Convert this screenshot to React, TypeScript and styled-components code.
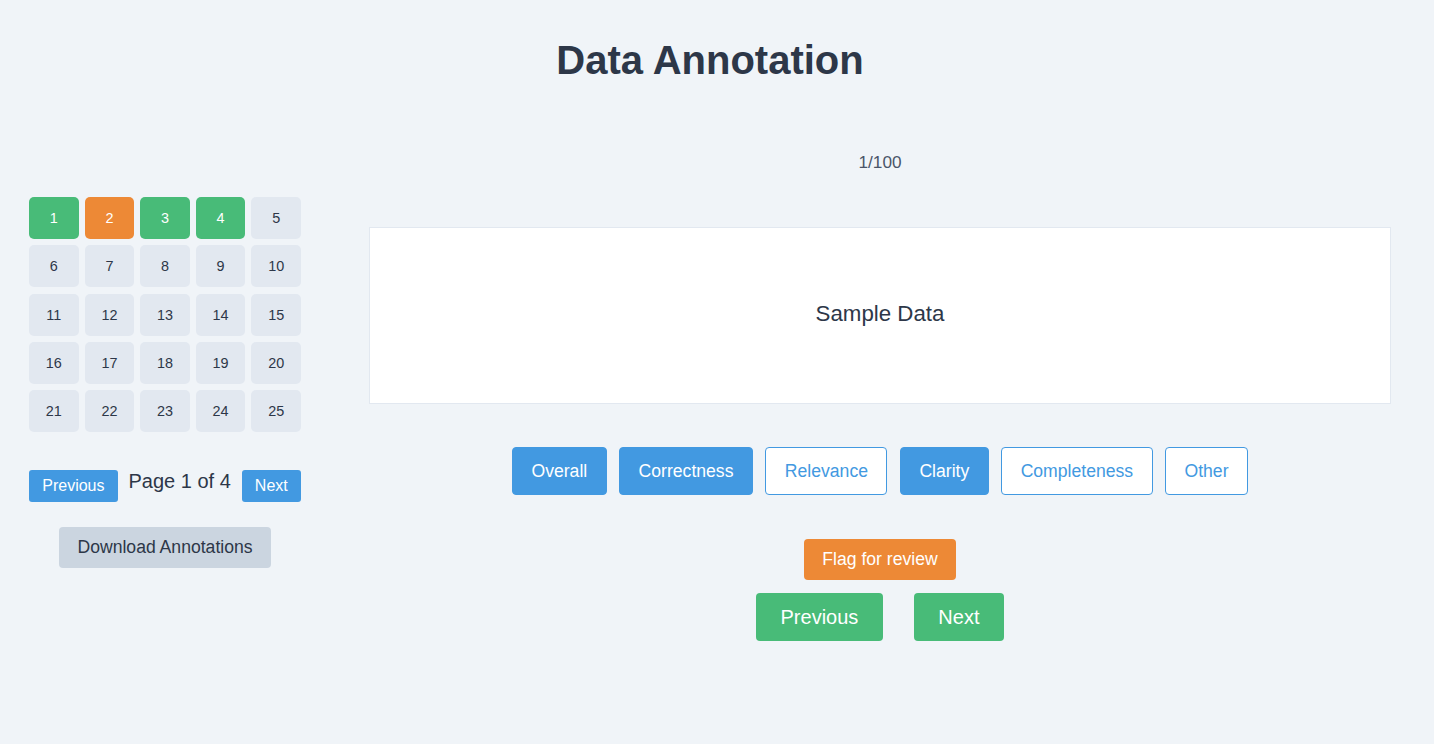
import React, { useState } from "react";
import styled, { createGlobalStyle, css } from "styled-components";

const GlobalStyle = createGlobalStyle`
  html, body {
    margin: 0;
    padding: 0;
    background: #f0f4f8;
    font-family: "Liberation Sans", Arial, sans-serif;
    color: #2d3748;
  }
  * { box-sizing: border-box; }
`;

const Page = styled.div`
  min-height: 744px;
  padding: 0 43px 0 29px;
`;

const Title = styled.h1`
  margin: 37px 0 0;
  font-size: 40px;
  line-height: 46px;
  font-weight: 700;
  text-align: center;
  color: #2d3748;
`;

const Layout = styled.div`
  display: flex;
  align-items: flex-start;
  gap: 68px;
`;

const Sidebar = styled.aside`
  width: 272px;
  flex-shrink: 0;
  margin-top: 114px;
  display: flex;
  flex-direction: column;
  align-items: center;
`;

const Grid = styled.div`
  width: 100%;
  display: grid;
  grid-template-columns: repeat(5, 1fr);
  grid-auto-rows: 42px;
  column-gap: 6px;
  row-gap: 6.25px;
`;

type CellState = "done" | "flagged" | "idle";

const Cell = styled.button<{ $state: CellState }>`
  border: none;
  border-radius: 5px;
  font-family: inherit;
  font-size: 14.4px;
  cursor: pointer;
  padding: 0;
  ${({ $state }) =>
    $state === "done"
      ? css`background: #48bb78; color: #fff;`
      : $state === "flagged"
      ? css`background: #ed8936; color: #fff;`
      : css`background: #e2e8f0; color: #2d3748;`}
`;

const Pager = styled.div`
  margin-top: 38px;
  display: flex;
  align-items: flex-start;
  justify-content: center;
  gap: 11px;
  width: 100%;
`;

const SmallButton = styled.button`
  height: 32px;
  padding: 0 13px;
  border: none;
  border-radius: 3px;
  background: #4299e1;
  color: #fff;
  font-family: inherit;
  font-size: 16px;
  cursor: pointer;
`;

const PageLabel = styled.span`
  font-size: 20px;
  line-height: 23px;
  color: #2d3748;
  white-space: nowrap;
`;

const DownloadButton = styled.button`
  margin-top: 25px;
  height: 41px;
  padding: 0 18px;
  border: none;
  border-radius: 4px;
  background: #cbd5e0;
  color: #2d3748;
  font-family: inherit;
  font-size: 17.6px;
  cursor: pointer;
`;

const Main = styled.main`
  flex: 1;
  display: flex;
  flex-direction: column;
  align-items: center;
  padding-top: 69px;
`;

const Counter = styled.div`
  font-size: 17.2px;
  line-height: 20px;
  color: #4a5568;
`;

const DataCard = styled.div`
  margin-top: 55px;
  width: 100%;
  height: 177px;
  padding-bottom: 4px;
  background: #fff;
  border: 1px solid #e2e8f0;
  display: flex;
  align-items: center;
  justify-content: center;
  font-size: 22.3px;
  color: #2d3748;
`;

const CategoryRow = styled.div`
  margin-top: 43px;
  display: flex;
  gap: 12.4px;
  justify-content: center;
`;

const CategoryButton = styled.button<{ $active: boolean }>`
  height: 48px;
  padding: 0 18.5px;
  border-radius: 4px;
  border: 1px solid #4299e1;
  font-family: inherit;
  font-size: 17.6px;
  cursor: pointer;
  ${({ $active }) =>
    $active
      ? css`background: #4299e1; color: #fff;`
      : css`background: #fff; color: #4299e1;`}
`;

const FlagButton = styled.button`
  margin-top: 44px;
  height: 41px;
  padding: 0 18.5px;
  border: none;
  border-radius: 4px;
  background: #ed8936;
  color: #fff;
  font-family: inherit;
  font-size: 17.6px;
  cursor: pointer;
`;

const NavRow = styled.div`
  margin-top: 13px;
  display: flex;
  gap: 31px;
  justify-content: center;
`;

const NavButton = styled.button`
  height: 48px;
  padding: 0 24.5px;
  border: none;
  border-radius: 4px;
  background: #48bb78;
  color: #fff;
  font-family: inherit;
  font-size: 20px;
  cursor: pointer;
`;

const categories = [
  { label: "Overall", active: true },
  { label: "Correctness", active: true },
  { label: "Relevance", active: false },
  { label: "Clarity", active: true },
  { label: "Completeness", active: false },
  { label: "Other", active: false },
];

const stateFor = (n: number): CellState =>
  n === 2 ? "flagged" : n === 1 || n === 3 || n === 4 ? "done" : "idle";

export default function App() {
  const [cats, setCats] = useState(categories);
  const cells = Array.from({ length: 25 }, (_, i) => i + 1);

  return (
    <>
      <GlobalStyle />
      <Page>
        <Title>Data Annotation</Title>
        <Layout>
          <Sidebar>
            <Grid>
              {cells.map((n) => (
                <Cell key={n} $state={stateFor(n)}>
                  {n}
                </Cell>
              ))}
            </Grid>
            <Pager>
              <SmallButton>Previous</SmallButton>
              <PageLabel>Page 1 of 4</PageLabel>
              <SmallButton>Next</SmallButton>
            </Pager>
            <DownloadButton>Download Annotations</DownloadButton>
          </Sidebar>
          <Main>
            <Counter>1/100</Counter>
            <DataCard>Sample Data</DataCard>
            <CategoryRow>
              {cats.map((c, i) => (
                <CategoryButton
                  key={c.label}
                  $active={c.active}
                  onClick={() =>
                    setCats(cats.map((x, j) => (j === i ? { ...x, active: !x.active } : x)))
                  }
                >
                  {c.label}
                </CategoryButton>
              ))}
            </CategoryRow>
            <FlagButton>Flag for review</FlagButton>
            <NavRow>
              <NavButton>Previous</NavButton>
              <NavButton>Next</NavButton>
            </NavRow>
          </Main>
        </Layout>
      </Page>
    </>
  );
}
